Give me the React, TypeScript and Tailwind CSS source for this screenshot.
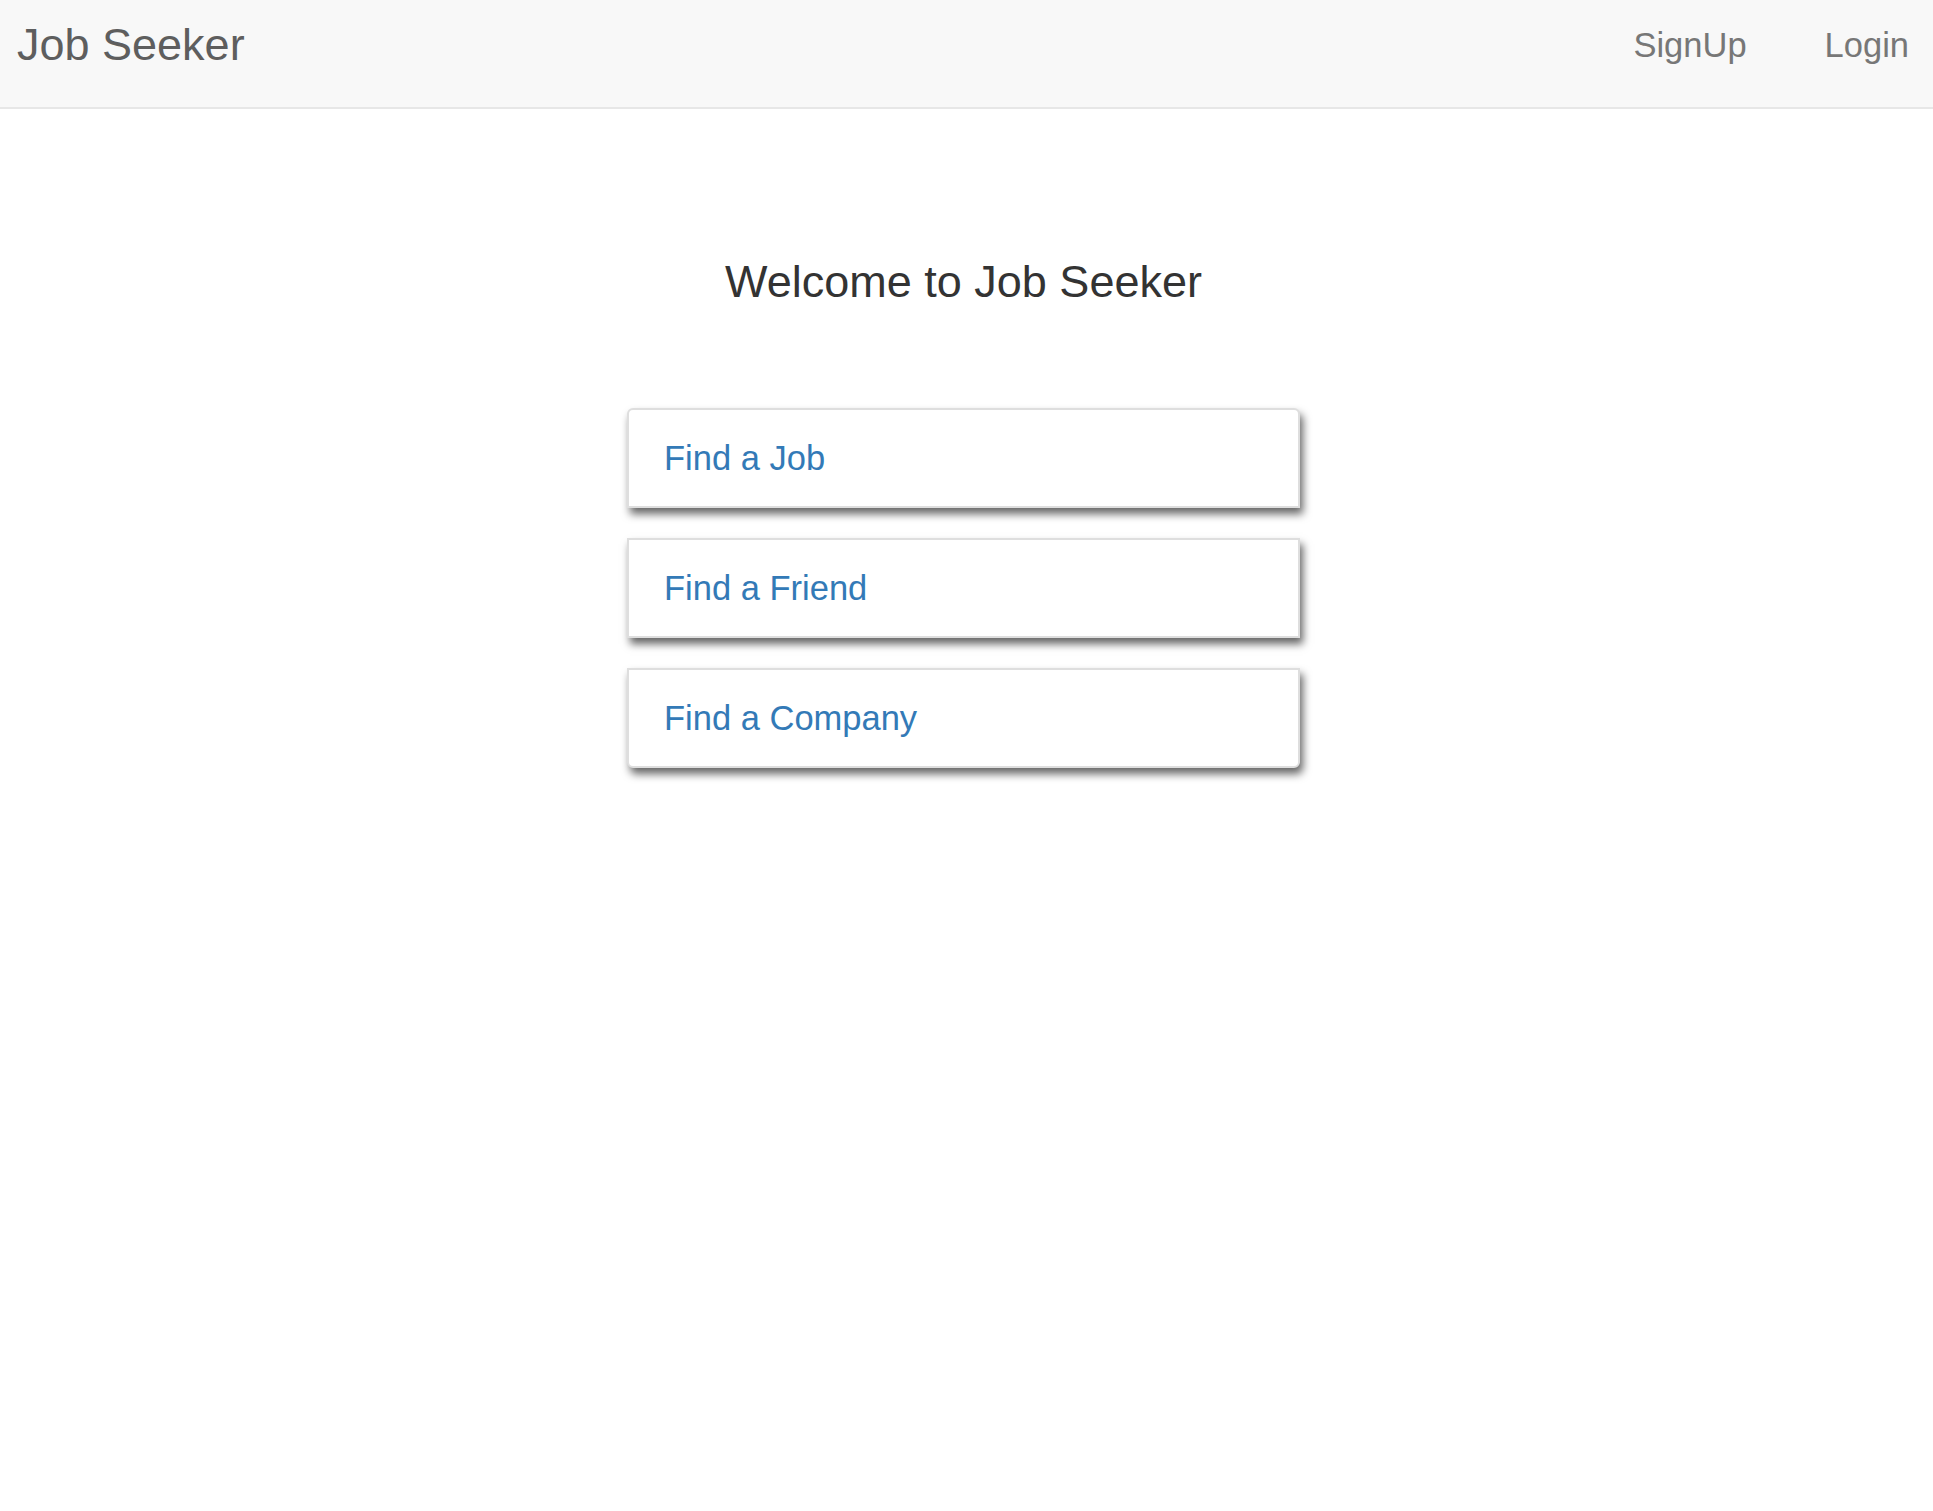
const links = ['Find a Job', 'Find a Friend', 'Find a Company']

export default function App() {
  return (
    <div className="min-h-screen bg-white font-['Liberation_Sans',Arial,sans-serif]">
      {/* Navbar */}
      <header className="h-[109px] bg-[#f8f8f8] border-b-2 border-[#e7e7e7] flex justify-between items-start">
        <a href="#" className="pl-[17px] pt-[22px] text-[45px] leading-none text-[#5e5e5e]">
          Job Seeker
        </a>
        <nav className="flex gap-[78px] pr-[24px] pt-[28px] text-[34.5px] leading-none text-[#777]">
          <a href="#">SignUp</a>
          <a href="#">Login</a>
        </nav>
      </header>

      {/* Main */}
      <main className="pr-[6px]">
        <h2 className="mt-[150px] text-center text-[45px] leading-none text-[#333]">
          Welcome to Job Seeker
        </h2>

        <div className="mx-auto mt-[104px] w-[673px] flex flex-col gap-[30px]">
          {links.map((label, i) => (
            <a
              key={label}
              href="#"
              className={
                'h-[100px] flex items-center pl-[35px] bg-white border-2 border-[#dedede] text-[34.5px] leading-none text-[#337ab7] shadow-[3px_6px_8px_rgba(0,0,0,0.6)] ' +
                (i === 0 ? 'rounded-t-[6px]' : i === links.length - 1 ? 'rounded-b-[6px]' : '')
              }
            >
              {label}
            </a>
          ))}
        </div>
      </main>
    </div>
  )
}
